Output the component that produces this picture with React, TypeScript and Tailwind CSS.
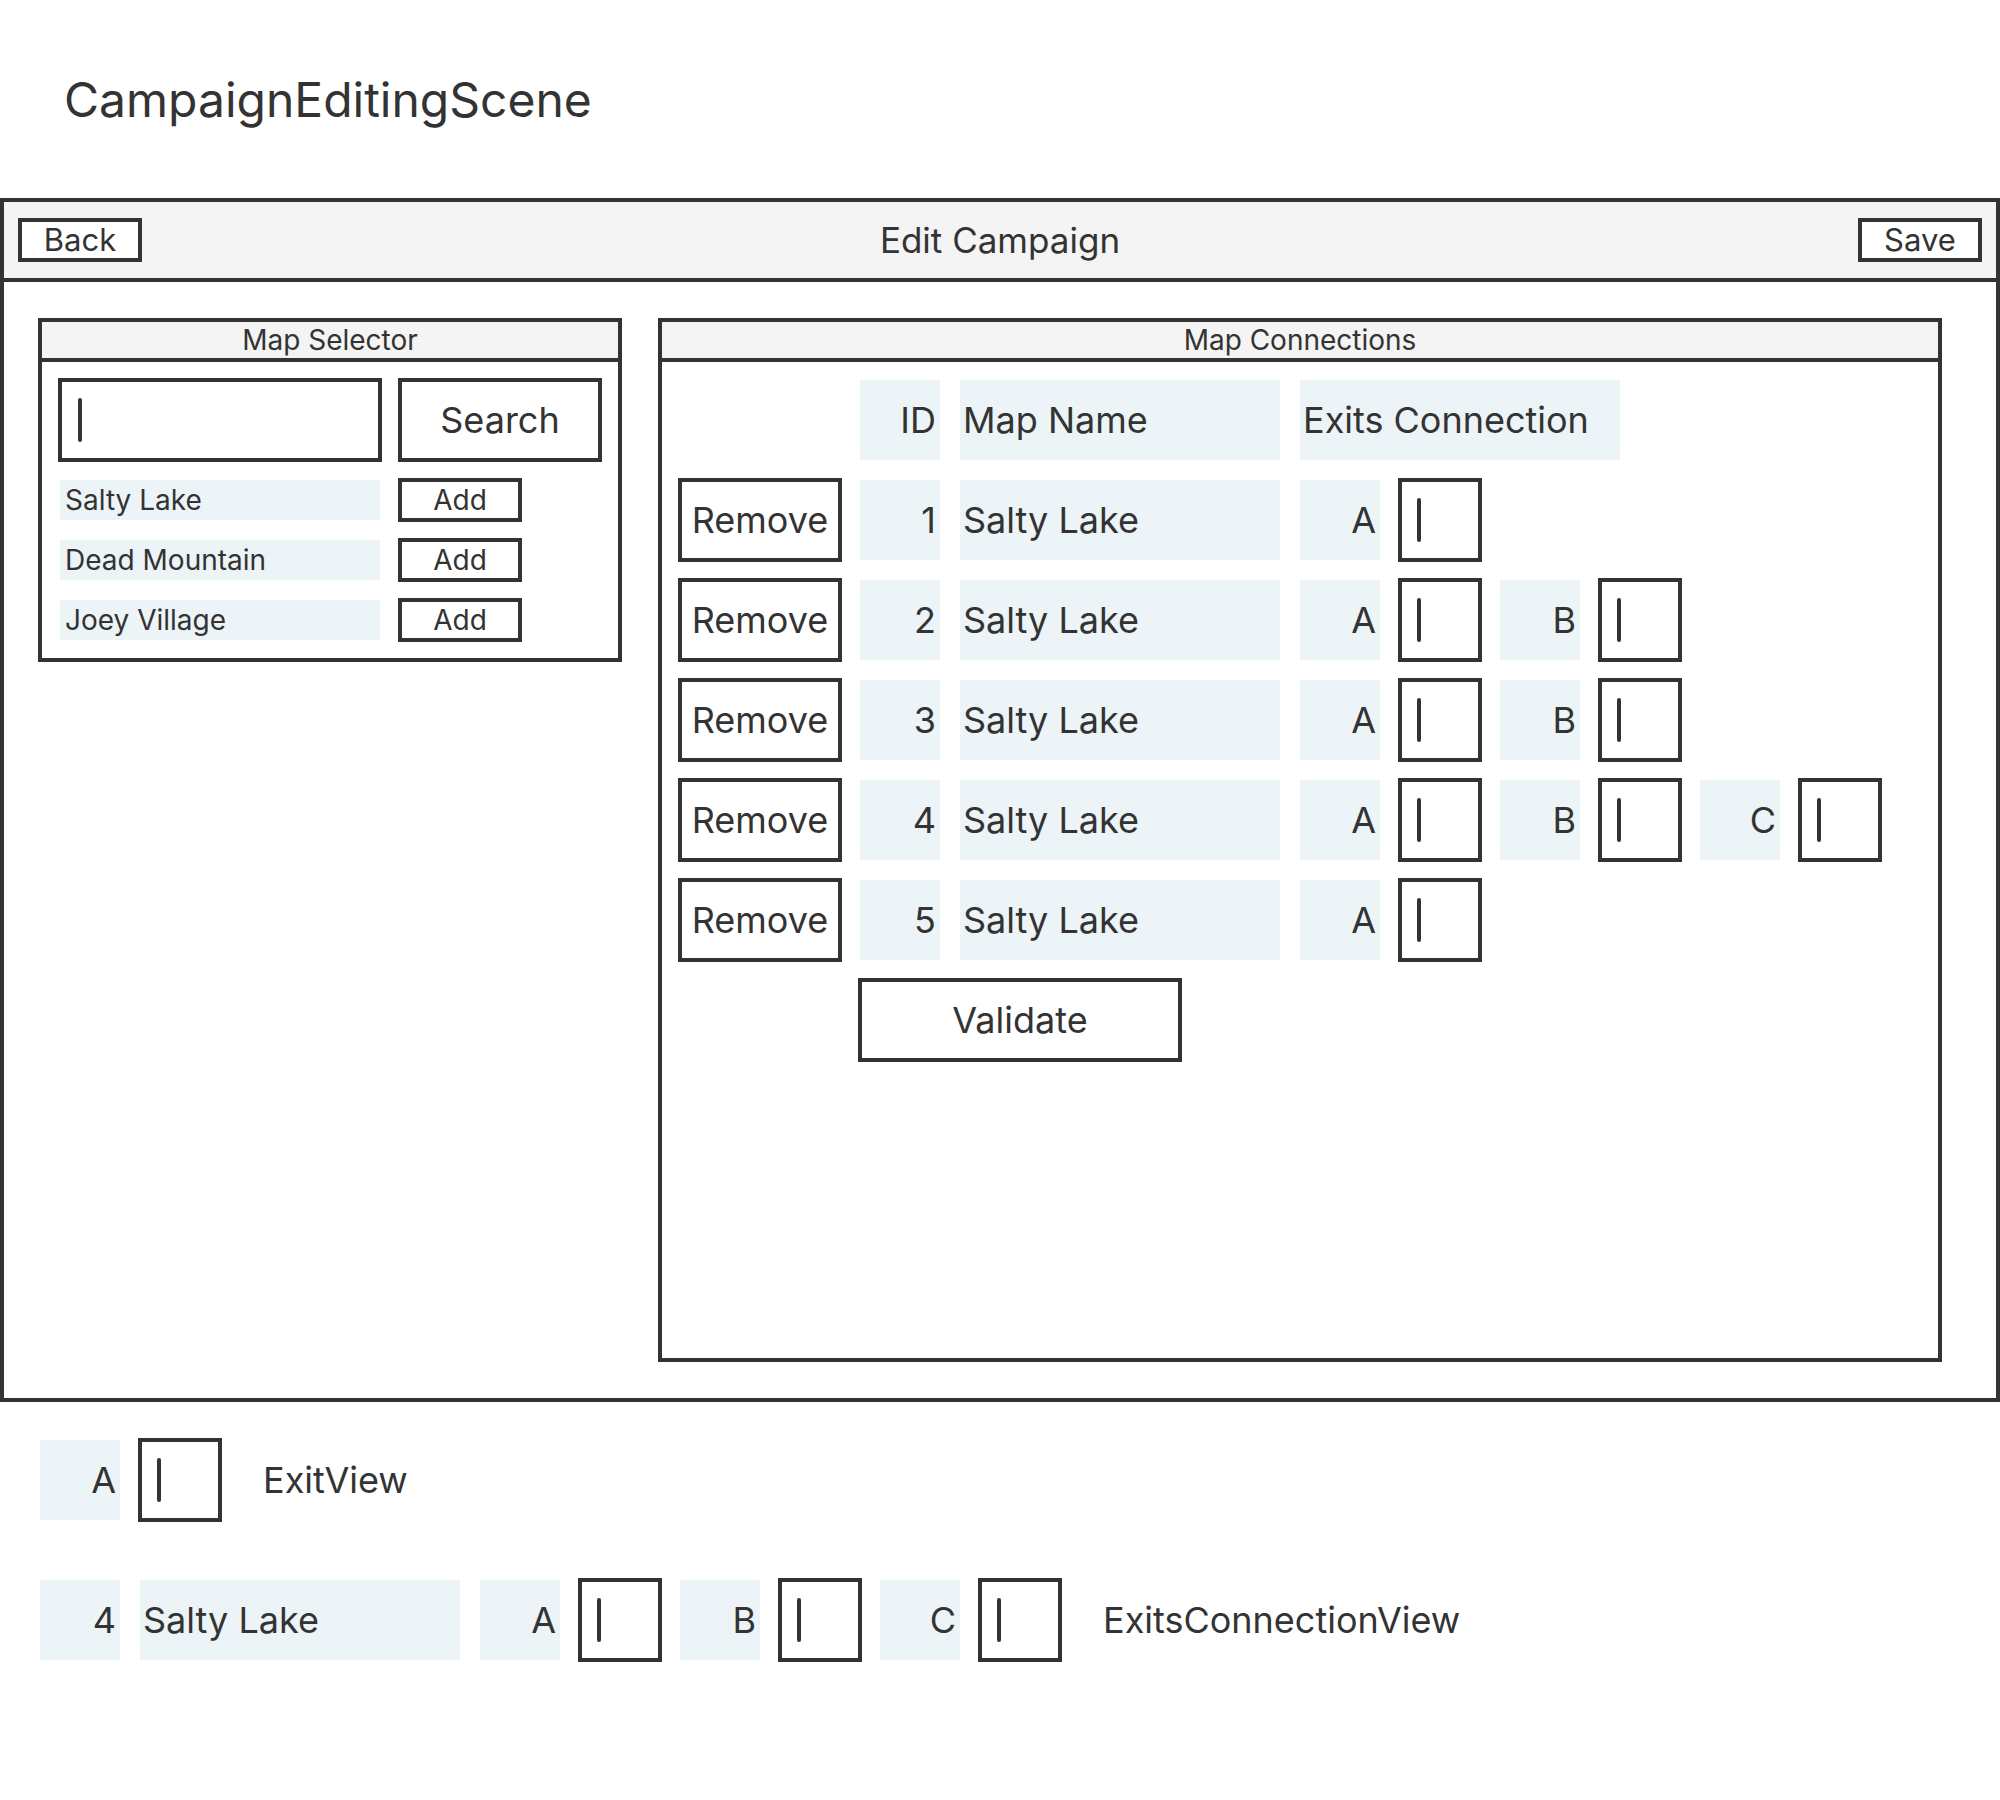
const INK = "text-[#333333]";

const mapsFound = ["Salty Lake", "Dead Mountain", "Joey Village"];

const connections = [
  { id: 1, name: "Salty Lake", exits: ["A"] },
  { id: 2, name: "Salty Lake", exits: ["A", "B"] },
  { id: 3, name: "Salty Lake", exits: ["A", "B"] },
  { id: 4, name: "Salty Lake", exits: ["A", "B", "C"] },
  { id: 5, name: "Salty Lake", exits: ["A"] },
];

// stroked boxes use -m-0.5 so the 4px stroke sits centred on the layout edge
function Cursor({ className = "" }: { className?: string }) {
  return <div className={`h-[44px] w-[4px] rounded-full bg-[#333333] ${className}`} />;
}

function TextBox({ width = "w-[84px]" }: { width?: string }) {
  return (
    <div className={`-m-0.5 flex h-[84px] shrink-0 items-center border-4 border-[#333333] bg-white pl-[15px] ${width}`}>
      <Cursor />
    </div>
  );
}

function Cell({
  children,
  width = "w-[80px]",
  align = "end",
}: {
  children: React.ReactNode;
  width?: string;
  align?: "start" | "end";
}) {
  return (
    <div
      className={`flex h-[80px] shrink-0 items-center bg-[#ecf4f7] text-[36px] ${
        align === "end" ? "justify-end pr-[4px]" : "justify-start pl-[3px]"
      } ${width}`}
    >
      {children}
    </div>
  );
}

function ExitView({ label }: { label: string }) {
  return (
    <div className="flex items-center gap-5">
      <Cell>{label}</Cell>
      <TextBox />
    </div>
  );
}

function ExitsConnection({ id, name, exits }: { id: number; name: string; exits: string[] }) {
  return (
    <div className="flex items-center gap-5">
      <Cell>{id}</Cell>
      <Cell width="w-[320px]" align="start">
        {name}
      </Cell>
      {exits.map((e) => (
        <ExitView key={e} label={e} />
      ))}
    </div>
  );
}

function Panel({
  title,
  className,
  children,
}: {
  title: string;
  className: string;
  children: React.ReactNode;
}) {
  return (
    <div className={`-m-0.5 flex shrink-0 flex-col border-4 border-[#333333] bg-white ${className}`}>
      <div className="flex h-[40px] shrink-0 items-center justify-center border-b-4 border-[#333333] bg-[#f4f4f4] text-[28px]">
        {title}
      </div>
      <div className="p-[18px]">{children}</div>
    </div>
  );
}

function OutlineButton({ label, className }: { label: string; className: string }) {
  return (
    <button
      type="button"
      className={`-m-0.5 flex shrink-0 items-center justify-center border-4 border-[#333333] bg-white ${className}`}
    >
      {label}
    </button>
  );
}

export default function App() {
  return (
    <div
      className={`min-h-[1800px] w-[2000px] bg-white ${INK}`}
      style={{ fontFamily: "Inter, 'Noto Sans', sans-serif" }}
    >
      <div className="h-[198px] pl-[64px] pt-[76px] text-[48px] leading-none">CampaignEditingScene</div>

      <div className="flex h-[1204px] flex-col border-4 border-[#333333]">
        <div className="flex h-[80px] shrink-0 items-center justify-between border-b-4 border-[#333333] bg-[#f4f4f4] px-[16px]">
          <OutlineButton label="Back" className="h-[44px] w-[124px] text-[31px]" />
          <div className="text-[35px]">Edit Campaign</div>
          <OutlineButton label="Save" className="h-[44px] w-[124px] text-[31px]" />
        </div>

        <div className="flex items-start gap-10 pl-[36px] pt-[38px]">
          <Panel title="Map Selector" className="w-[584px] h-[344px]">
            <div className="flex flex-col gap-5">
              <div className="flex gap-5">
                <div className="-m-0.5 flex h-[84px] w-[324px] items-center border-4 border-[#333333] pl-[16px]">
                  <Cursor />
                </div>
                <OutlineButton label="Search" className="h-[84px] w-[204px] text-[36px]" />
              </div>
              {mapsFound.map((m) => (
                <div key={m} className="flex gap-5">
                  <div className="flex h-[40px] w-[320px] items-center bg-[#ecf4f7] pl-[5px] text-[28px]">{m}</div>
                  <OutlineButton label="Add" className="h-[44px] w-[124px] text-[28px]" />
                </div>
              ))}
            </div>
          </Panel>

          <Panel title="Map Connections" className="w-[1284px] h-[1044px]">
            <div className="flex flex-col gap-5">
              <div className="flex gap-5">
                <div className="w-[160px] shrink-0" />
                <Cell>ID</Cell>
                <Cell width="w-[320px]" align="start">
                  Map Name
                </Cell>
                <Cell width="w-[320px]" align="start">
                  Exits Connection
                </Cell>
              </div>
              {connections.map((c) => (
                <div key={c.id} className="flex items-center gap-5">
                  <OutlineButton label="Remove" className="h-[84px] w-[164px] text-[36px]" />
                  <ExitsConnection id={c.id} name={c.name} exits={c.exits} />
                </div>
              ))}
              <div className="flex gap-5">
                <div className="w-[160px] shrink-0" />
                <OutlineButton label="Validate" className="h-[84px] w-[324px] text-[36px]" />
              </div>
            </div>
          </Panel>
        </div>
      </div>

      <div className="flex flex-col gap-[60px] pl-[40px] pt-[38px]">
        <div className="flex items-center">
          <ExitView label="A" />
          <div className="ml-[43px] text-[36px]">ExitView</div>
        </div>
        <div className="flex items-center">
          <ExitsConnection id={4} name="Salty Lake" exits={["A", "B", "C"]} />
          <div className="ml-[43px] text-[36px]">ExitsConnectionView</div>
        </div>
      </div>
    </div>
  );
}
